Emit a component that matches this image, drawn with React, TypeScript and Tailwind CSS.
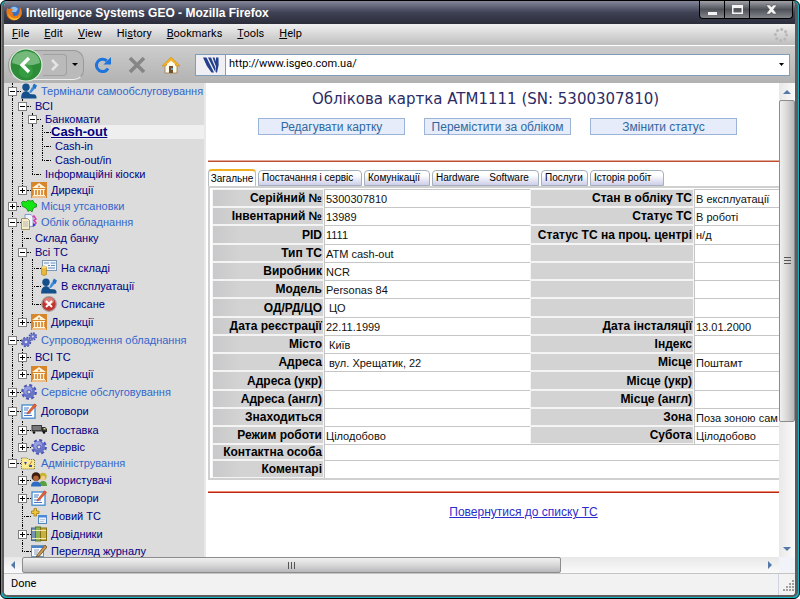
import React from "react";

type IconProps = { className?: string };
const iconBox = "h-4 w-4 shrink-0";

function FirefoxIcon() {
  return (
    <svg viewBox="0 0 16 16" className={iconBox} aria-hidden="true">
      <circle cx="8.5" cy="7.5" r="6.5" fill="#3b6fc4" />
      <path d="M5 3 Q9 0 12 4 L10 7 L6 7 Z" fill="#8fc0ee" />
      <path d="M1 3 Q2 4 3 4 Q5 3 7 4 L6 6 Q5 7 7 8 Q6 11 9 11 Q13 11 13.5 6 Q14.5 2 12 1 Q16 3 16 8 Q15 15 8 15.500 Q1 15 0.500 8 Q0.500 5 1 3Z" fill="#e8791a" />
      <path d="M2 6 Q2 12 8 13.500 Q13 14 14.500 9 Q13 15.500 8 15 Q2 14 2 6Z" fill="#f8c830" />
    </svg>
  );
}

function UserIcon() {
  return (
    <svg viewBox="0 0 16 16" className={iconBox} aria-hidden="true">
      <circle cx="5" cy="4.300" r="3.700" fill="#14508c" />
      <path d="M0 15.500 Q0 8.500 5 8 Q7.500 8 9 11 L14 11.500 Q16 12.500 15.500 15.500Z" fill="#14508c" />
      <path d="M8 9.500 L11 4 L14 5.500 L10 10Z" fill="#3c8cd8" />
      <path d="M11.500 3 L13 0.500 L16 2.500 L14.500 6 L12 5Z" fill="#2474c8" />
    </svg>
  );
}

function BankIcon() {
  return (
    <svg viewBox="0 0 16 16" className={iconBox} aria-hidden="true">
      <rect width="16" height="16" fill="#d8862c" />
      <path d="M1 6 L8 1 L15 6Z M2 7h12v1H2Z M2 13h12v1H2Z M1 14.500h14v1H1Z" fill="#fff4dc" />
      <path d="M3.500 8v5M6.500 8v5M9.500 8v5M12.500 8v5" stroke="#fff4dc" strokeWidth="1.300" />
      <circle cx="8" cy="4.500" r="1" fill="#d8862c" />
    </svg>
  );
}

function MapIcon() {
  return (
    <svg viewBox="0 0 16 16" className={iconBox} aria-hidden="true">
      <path d="M0.500 4.500 L2 3 L5 4 L7 2 L9 3 L12 2.500 L13 5 L15.500 6 L15.500 9 L13 9.500 L12 11 L11 14 L9 12 L7 13.500 L6 11 L4 9.500 L1.500 8.500Z" fill="#14e614" stroke="#08780c" strokeWidth="0.700" />
    </svg>
  );
}

function DocsIcon() {
  return (
    <svg viewBox="0 0 16 16" className={iconBox} aria-hidden="true">
      <path d="M4 0.500h6l2 2v10H4Z" fill="#eef4ff" stroke="#6c88c0" strokeWidth="0.800" />
      <path d="M0.500 4.500h6l2 2v9h-8Z" fill="#f4ecc8" stroke="#8c7c50" strokeWidth="0.800" />
      <path d="M2 8h5M2 10h5M2 12h5" stroke="#a0a4b0" strokeWidth="0.700" />
      <path d="M11.500 3 L13 2 L15 5 L13 6.500 L15 9 L12 12" fill="none" stroke="#d83ca8" strokeWidth="1.500" />
      <path d="M12 9 l3 2 l-3 2z" fill="#3848d0" />
    </svg>
  );
}

function StockIcon() {
  return (
    <svg viewBox="0 0 16 16" className={iconBox} aria-hidden="true">
      <rect x="1.500" y="0.500" width="14" height="10" fill="#f0f6ff" stroke="#7c98b8" />
      <path d="M3 3h5M9.500 3h5M7 5.500h2M10 5.500h4M7 8h7" stroke="#5c80a8" strokeWidth="0.900" />
      <path d="M0.500 7 Q3 5 5.500 7 V14.500 Q3 16.500 0.500 14.500Z" fill="#e8b83c" stroke="#a87c14" strokeWidth="0.600" />
      <ellipse cx="3" cy="7.200" rx="2.400" ry="1" fill="#fbe48c" />
    </svg>
  );
}

function CancelIcon() {
  return (
    <svg viewBox="0 0 16 16" className={iconBox} aria-hidden="true">
      <circle cx="8" cy="8" r="7.300" fill="#c03430" stroke="#a8a0a0" strokeWidth="1.200" />
      <ellipse cx="8" cy="5" rx="5" ry="3.400" fill="#dc7c74" />
      <path d="M5 5l6 6M11 5l-6 6" stroke="#fff" strokeWidth="2" />
    </svg>
  );
}

function GearIcon() {
  return (
    <svg viewBox="0 0 16 16" className={iconBox} aria-hidden="true">
      <circle cx="8" cy="8" r="6.600" fill="none" stroke="#4c54b4" strokeWidth="2.600" strokeDasharray="2.900 2.284" />
      <circle cx="8" cy="8" r="6" fill="#6874c8" />
      <circle cx="7" cy="6.500" r="4" fill="#949ee0" />
      <circle cx="8" cy="8" r="2" fill="#dcdcdc" stroke="#4c54b4" />
    </svg>
  );
}

function GearsIcon() {
  return (
    <svg viewBox="0 0 16 16" className={iconBox} aria-hidden="true">
      <circle cx="5" cy="10" r="4.200" fill="none" stroke="#444ca8" strokeWidth="2" strokeDasharray="1.900 1.399" />
      <circle cx="5" cy="10" r="4" fill="#6874c8" />
      <circle cx="5" cy="10" r="1.300" fill="#e0e0ec" />
      <circle cx="11.800" cy="4.500" r="3.300" fill="none" stroke="#444ca8" strokeWidth="1.800" strokeDasharray="1.500 1.092" />
      <circle cx="11.800" cy="4.500" r="3" fill="#6874c8" />
      <circle cx="11.800" cy="4.500" r="1" fill="#e0e0ec" />
    </svg>
  );
}

function ContractIcon() {
  return (
    <svg viewBox="0 0 16 16" className={iconBox} aria-hidden="true">
      <rect x="1" y="2" width="13" height="13.200" fill="#fff" stroke="#4c90d0" strokeWidth="1.400" />
      <path d="M3 5h5M3 7h4M3 10h7M3 12.500h8" stroke="#4878c8" />
      <path d="M6.500 9.500 L13.500 0.800 L15.700 2.500 L8.500 10 L6 11Z" fill="#e46038" stroke="#a83818" strokeWidth="0.500" />
    </svg>
  );
}

function TruckIcon() {
  return (
    <svg viewBox="0 0 16 16" className={iconBox} aria-hidden="true">
      <rect x="0.500" y="3" width="10.500" height="6.500" fill="#3c3c3c" />
      <rect x="1.500" y="4" width="8.500" height="4" fill="#787878" />
      <path d="M11 5h3l2 2v3h-5Z" fill="#303030" />
      <path d="M12.500 6h1.500l1 1.500h-2.500Z" fill="#d8dc78" />
      <circle cx="3" cy="10.500" r="1.300" fill="#111" />
      <circle cx="13" cy="10.500" r="1.300" fill="#111" />
    </svg>
  );
}

function FolderIcon() {
  return (
    <svg viewBox="0 0 16 16" className={iconBox} aria-hidden="true">
      <path d="M0.500 3h5.500l1.500 1.500H13.500V14H0.500Z" fill="#fbec94" stroke="#7c6c20" strokeDasharray="1 1" />
      <path d="M3 7h3l-1.500 3z M8 10h3v2H8z" fill="#3c50a0" />
      <path d="M11 6l-3 5" stroke="#c87828" />
    </svg>
  );
}

function UsersIcon() {
  return (
    <svg viewBox="0 0 16 16" className={iconBox} aria-hidden="true">
      <circle cx="12" cy="4.500" r="3.700" fill="#c8b430" />
      <circle cx="12" cy="6" r="2.300" fill="#f0cc94" />
      <path d="M8 14 Q8 9 12 9 Q16 9 16 14Z" fill="#58a040" />
      <circle cx="5" cy="4.700" r="4.400" fill="#3c1c10" />
      <circle cx="5" cy="6.300" r="2.800" fill="#b06438" />
      <path d="M0 14.500 Q0 9.500 5 9.500 Q10 9.500 10 14.500Z" fill="#2c6cc4" />
    </svg>
  );
}

function NewIcon() {
  return (
    <svg viewBox="0 0 16 16" className={iconBox} aria-hidden="true">
      <rect x="7.500" y="7.500" width="8" height="8" fill="#eaf2ff" stroke="#5484c0" />
      <path d="M7 7h9v2.500H7Z" fill="#4c88d8" />
      <path d="M9 11.500h5M9 13.500h4" stroke="#b8c8e0" />
      <path d="M3 0.500h2.500v2.500H8V5.500H5.500v2.500H3V5.500H0.500V3H3Z" fill="#f0c83c" stroke="#a07c18" strokeWidth="0.800" />
    </svg>
  );
}

function BooksIcon() {
  return (
    <svg viewBox="0 0 16 16" className={iconBox} aria-hidden="true">
      <rect x="0.500" y="2" width="4" height="12.500" fill="#7894b4" stroke="#4c6484" />
      <rect x="4.500" y="1" width="5" height="14" fill="#8cb454" stroke="#547c28" />
      <rect x="9.500" y="2" width="6" height="12.500" fill="#c8b03c" stroke="#847018" />
      <path d="M1 4.500h14M1 12.500h14" stroke="#f0e8b8" />
    </svg>
  );
}

function LogIcon() {
  return (
    <svg viewBox="0 0 16 16" className={iconBox} aria-hidden="true">
      <rect x="0.500" y="2.500" width="12" height="11" fill="#f4f8ff" stroke="#6c90bc" />
      <path d="M1 3h11v2H1Z" fill="#4c84cc" />
      <path d="M3 7h5M3 9h4M3 11h3" stroke="#90a0b8" />
      <path d="M6 12 L14 2 L16 4 L8.500 13 L5.500 14Z" fill="#c89850" stroke="#543c18" strokeWidth="0.700" />
    </svg>
  );
}

type Node = {
  label: string;
  rails: string;
  box?: "+" | "-";
  last?: boolean;
  height: string;
  Icon?: React.FC<IconProps>;
  section?: boolean;
  current?: boolean;
};

// rails: one character for each ancestor column, "|" where its line goes on.
const tree: Node[] = [
  { label: "Термінали самообслуговування", rails: "", box: "-", height: "h-4", Icon: UserIcon, section: true },
  { label: "ВСІ", rails: "|", box: "-", height: "h-3.5" },
  { label: "Банкомати", rails: "||", box: "-", height: "h-3" },
  { label: "Cash-out", rails: "|||", height: "h-3.5", current: true },
  { label: "Cash-in", rails: "|||", height: "h-3.5" },
  { label: "Cash-out/in", rails: "|||", height: "h-3.5", last: true },
  { label: "Інформаційні кіоски", rails: "||", height: "h-3.5", last: true },
  { label: "Дирекції", rails: "|", box: "+", height: "h-4.5", Icon: BankIcon, last: true },
  { label: "Місця утсановки", rails: "", box: "+", height: "h-3.5", Icon: MapIcon, section: true },
  { label: "Облік обладнання", rails: "", box: "-", height: "h-4.5", Icon: DocsIcon, section: true },
  { label: "Склад банку", rails: "|", height: "h-3.5" },
  { label: "Всі ТС", rails: "|", box: "-", height: "h-3.5" },
  { label: "На складі", rails: "||", height: "h-4.5", Icon: StockIcon },
  { label: "В експлуатації", rails: "||", height: "h-4.5", Icon: UserIcon },
  { label: "Списане", rails: "||", height: "h-4.5", Icon: CancelIcon, last: true },
  { label: "Дирекції", rails: "|", box: "+", height: "h-4.5", Icon: BankIcon, last: true },
  { label: "Супроводження обладнання", rails: "", box: "-", height: "h-4.5", Icon: GearsIcon, section: true },
  { label: "ВСІ ТС", rails: "|", box: "+", height: "h-4" },
  { label: "Дирекції", rails: "|", box: "+", height: "h-4.5", Icon: BankIcon, last: true },
  { label: "Сервісне обслуговування", rails: "", box: "+", height: "h-4.5", Icon: GearIcon, section: true },
  { label: "Договори", rails: "", box: "-", height: "h-5", Icon: ContractIcon },
  { label: "Поставка", rails: "|", box: "+", height: "h-4.5", Icon: TruckIcon },
  { label: "Сервіс", rails: "|", box: "+", height: "h-4", Icon: GearIcon, last: true },
  { label: "Адміністрування", rails: "", box: "-", height: "h-4", Icon: FolderIcon, section: true, last: true },
  { label: "Користувачі", rails: " ", box: "+", height: "h-4.5", Icon: UsersIcon },
  { label: "Договори", rails: " ", box: "+", height: "h-4.5", Icon: ContractIcon },
  { label: "Новий ТС", rails: " ", height: "h-4.5", Icon: NewIcon },
  { label: "Довідники", rails: " ", box: "+", height: "h-4.5", Icon: BooksIcon },
  { label: "Перегляд журналу", rails: " ", height: "h-4", Icon: LogIcon, last: true },
];

function TreeRow({ node }: { node: Node }) {
  const { Icon } = node;
  return (
    <li className={`flex items-center whitespace-nowrap ${node.height}`}>
      {node.rails.split("").map((rail, i) => (
        <span key={i} className="flex h-full w-2.5 shrink-0 pl-[5px]">
          {rail === "|" && <span className="h-full border-l border-dotted border-black" />}
        </span>
      ))}
      <span className="grid h-full w-2.5 shrink-0 grid-cols-1 grid-rows-1">
        <span className="col-start-1 row-start-1 flex pl-[5px]">
          <span className={`border-l border-dotted border-black ${node.last ? "h-1/2" : "h-full"}`} />
        </span>
        {node.box ? (
          <button
            aria-label={node.box === "+" ? "Розгорнути" : "Згорнути"}
            className="z-10 col-start-1 row-start-1 ml-px grid h-[9px] w-[9px] place-items-center self-center border border-[#808080] bg-white"
          >
            <svg viewBox="0 0 5 5" className="h-[5px] w-[5px]" aria-hidden="true">
              <path d={node.box === "+" ? "M0 2h5v1H0zM2 0h1v5H2z" : "M0 2h5v1H0z"} fill="#000" />
            </svg>
          </button>
        ) : (
          <span className="col-start-1 row-start-1 ml-[5px] self-center border-t border-dotted border-black" />
        )}
      </span>
      <span className="w-1 shrink-0 border-t border-dotted border-black" />
      {Icon && <Icon />}
      {node.current ? (
        <a href="#cash-out" className="flex-1 bg-[#efefef] text-[13px] leading-[14px] font-bold text-[#000080] underline">
          {node.label}
        </a>
      ) : (
        <a href="#open" className={`pl-1 ${node.section ? "text-[#3366cc]" : "text-[#000080]"}`}>
          {node.label}
        </a>
      )}
    </li>
  );
}

type Row = { a: string; av?: string; b?: string; bv?: string; inset?: boolean };
const rows: Row[] = [
  { a: "Серійний №", av: "5300307810", b: "Стан в обліку ТС", bv: "В експлуатації" },
  { a: "Інвентарний №", av: "13989", b: "Статус ТС", bv: "В роботі" },
  { a: "PID", av: "1111", b: "Статус ТС на проц. центрі", bv: "н/д" },
  { a: "Тип ТС", av: "ATM cash-out" },
  { a: "Виробник", av: "NCR" },
  { a: "Модель", av: "Personas 84" },
  { a: "ОД/РД/ЦО", av: "ЦО", inset: true },
  { a: "Дата реєстрації", av: "22.11.1999", b: "Дата інсталяції", bv: "13.01.2000" },
  { a: "Місто", av: "Київ", b: "Індекс", inset: true },
  { a: "Адреса", av: "вул. Хрещатик, 22", b: "Місце", bv: "Поштамт", inset: true },
  { a: "Адреса (укр)", b: "Місце (укр)" },
  { a: "Адреса (англ)", b: "Місце (англ)" },
  { a: "Знаходиться", b: "Зона", bv: "Поза зоною сам" },
  { a: "Режим роботи", av: "Цілодобово", b: "Субота", bv: "Цілодобово" },
];

const labelCell =
  "border border-[#f4f4f4] bg-linear-to-r from-[#c9c9cb] to-[#d3d3d3] to-25% p-0 pr-px text-right align-middle font-bold text-[12px] leading-[14px] text-black";
const plainLabelCell =
  "border border-[#f4f4f4] bg-[#d3d3d3] p-0 pr-px text-right align-middle font-bold text-[12px] leading-[14px] text-black";
const valueCell = "border-t border-l border-[#c6c6c6] p-0 align-middle";

function CardTable() {
  return (
    <table className="w-full table-fixed border-separate border-spacing-0 text-[11px] leading-[14px] whitespace-nowrap text-[#111]">
      <colgroup>
        <col className="w-[112px]" />
        <col className="w-[206px]" />
        <col className="w-[164px]" />
        <col />
      </colgroup>
      <tbody>
        {rows.map((r, i) => (
          <tr key={r.a} className={i % 4 === 2 ? "h-[19px]" : "h-[18px]"}>
            <th scope="row" className={labelCell}>{r.a}</th>
            <td className={`${valueCell} ${r.inset ? "pl-1" : "pl-px"}`}>{r.av}</td>
            <th scope="row" className={plainLabelCell}>{r.b}</th>
            <td className={`${valueCell} pl-px`}>{r.bv}</td>
          </tr>
        ))}
        <tr className="h-4">
          <th scope="row" className={labelCell}>Контактна особа</th>
          <td colSpan={3} className={valueCell} />
        </tr>
        <tr className="h-[18px]">
          <th scope="row" className={labelCell}>Коментарі</th>
          <td colSpan={3} className={valueCell} />
        </tr>
      </tbody>
    </table>
  );
}

const tabs = [
  { label: "Постачання і сервіс", width: "w-[104px]" },
  { label: "Комунікації", width: "w-[66px]" },
  { label: "Hardware", label2: "Software", width: "w-[107px]" },
  { label: "Послуги", width: "w-[47px]" },
  { label: "Історія робіт", width: "w-[74px]" },
];

function Arrow({ d }: { d: string }) {
  return (
    <svg viewBox="0 0 8 8" className="h-2 w-2" aria-hidden="true">
      <path d={d} fill="#5478a8" />
    </svg>
  );
}

const menus = ["File", "Edit", "View", "History", "Bookmarks", "Tools", "Help"];
const accessKey = [0, 0, 0, 2, 0, 0, 0];

export default function App() {
  return (
    <div className="h-screen bg-white font-['Liberation_Sans',Arial,sans-serif] text-[11px] text-black">
      <div className="h-full rounded-md border border-black bg-[#12b4c4] pr-px pb-px pl-px">
        <div className="flex h-full flex-col overflow-hidden rounded-md border-r-3 border-b-2 border-l-2 border-[#5c5c5c] bg-[#f2f2f2]">
          <header className="flex h-[23px] shrink-0 items-start justify-between bg-linear-to-b from-[#85879a] via-[#3f4254] to-[#2b2d3b] pr-0.5 pl-0.5">
            <div className="flex items-center gap-1 pt-1 text-[12px] leading-4 font-bold text-white">
              <FirefoxIcon />
              <h1>Intelligence Systems GEO - Mozilla Firefox</h1>
            </div>
            <div className="flex h-[18px] divide-x divide-black overflow-hidden rounded-b border border-t-0 border-black bg-linear-to-b from-[#a0a2a8] via-[#50525a] to-[#85878c]">
              <button aria-label="Minimize" className="grid w-[25px] place-items-center">
                <svg viewBox="0 0 11 11" className="h-[11px] w-[11px]"><path d="M1 8h9v3H1z" fill="#f4f4f4" /></svg>
              </button>
              <button aria-label="Maximize" className="grid w-[25px] place-items-center">
                <svg viewBox="0 0 11 11" className="h-[11px] w-[11px]"><path d="M0 1h11v9H0zM1.500 4v4.500h8V4z" fill="#f4f4f4" fillRule="evenodd" /></svg>
              </button>
              <button aria-label="Close" className="grid w-[42px] place-items-center">
                <svg viewBox="0 0 11 11" className="h-[11px] w-[11px]"><path d="M0 1h4l1.500 2L7 1h4L7.500 5.500 11 10H7L5.500 8 4 10H0l3.500-4.500z" fill="#f4f4f4" stroke="#444" strokeWidth="0.500" /></svg>
              </button>
            </div>
          </header>

          <nav className="flex h-[22px] shrink-0 items-center justify-between border-b border-white bg-linear-to-b from-[#f0f0f0] to-[#bebebe] pr-1.5 pl-2 font-['Roboto',sans-serif] text-[11px]">
            <ul className="flex gap-[15px]">
              {menus.map((m, i) => (
                <li key={m}>
                  <button>
                    {m.slice(0, accessKey[i])}
                    <span className="underline">{m[accessKey[i]]}</span>
                    {m.slice(accessKey[i] + 1)}
                  </button>
                </li>
              ))}
            </ul>
            <svg viewBox="0 0 16 16" className="h-4 w-4" aria-hidden="true">
              <circle cx="8" cy="8" r="5.600" fill="none" stroke="#b8b8b8" strokeWidth="3" strokeLinecap="round" strokeDasharray="0.100 4.298" />
            </svg>
          </nav>

          <div className="flex h-[37px] shrink-0 items-center bg-linear-to-b from-[#cdcdcd] to-[#b2b2b2] pr-[5px] pl-1">
            <div className="flex h-[30px] w-[76px] items-center rounded-l-[15px] rounded-r-[10px] border border-[#999] border-b-[#eee] bg-[#bababa]">
              <button aria-label="Back" className="-my-1 shrink-0">
                <svg viewBox="0 0 34 34" className="h-[34px] w-[34px]">
                  <circle cx="17" cy="17" r="16" fill="#2c8c38" stroke="#dce8dc" strokeWidth="1.200" />
                  <path d="M3 15 Q4 4 17 3 Q30 4 31 15 Q17 20 3 15Z" fill="#74b87c" />
                  <circle cx="17" cy="23" r="7" fill="#3ca848" opacity="0.600" />
                  <path d="M20 10l-7 7 7 7" fill="none" stroke="#fff" strokeWidth="3.400" />
                </svg>
              </button>
              <button aria-label="Forward" className="grid h-[22px] w-6 place-items-center rounded-r border border-l-0 border-[#a0a0a0]">
                <svg viewBox="0 0 10 12" className="h-3 w-2.5"><path d="M2 1l5 5-5 5" fill="none" stroke="#e4e4e4" strokeWidth="2.600" /></svg>
              </button>
              <button aria-label="Recent pages" className="ml-[5px]">
                <svg viewBox="0 0 6 3" className="h-[3px] w-1.5"><path d="M0 0h6L3 3z" fill="#000" /></svg>
              </button>
            </div>
            <div className="flex items-center gap-4 pr-[15px] pl-2.5">
              <button aria-label="Reload">
                <svg viewBox="0 0 18 18" className="h-[18px] w-[18px]">
                  <path d="M14 12.500 A6.200 6.200 0 1 1 12.800 4.800" fill="none" stroke="#1c74dc" strokeWidth="3" />
                  <path d="M17 1v7.500H9.500z" fill="#1c74dc" />
                </svg>
              </button>
              <button aria-label="Stop">
                <svg viewBox="0 0 18 18" className="h-[18px] w-[18px]"><path d="M2 2l14 14M16 2L2 16" stroke="#868686" strokeWidth="3.600" /></svg>
              </button>
              <button aria-label="Home">
                <svg viewBox="0 0 18 18" className="h-[18px] w-[18px]">
                  <path d="M3 9h12v8H3z" fill="#fffbe8" stroke="#9c7c48" strokeWidth="0.800" />
                  <path d="M9 1L18 10H15L9 4.500 3 10H0z" fill="#f8b41c" stroke="#c88010" strokeWidth="0.500" />
                  <path d="M9 4.500l4 3.500v2H5V8z" fill="#fffbe8" />
                  <path d="M7 10h4v7H7z" fill="#74502c" />
                  <path d="M9 12h2v2H9z" fill="#58a8d8" />
                </svg>
              </button>
            </div>
            <div className="flex h-[22px] flex-1 items-center border border-[#7f9db9] bg-white">
              <div className="grid h-full w-[30px] place-items-center border-r border-[#7f9db9] bg-[#f0f0f4]">
                <svg viewBox="0 0 18 18" className="h-[18px] w-[18px]" aria-hidden="true">
                  <path d="M1 1.500H4.500L12 16.500H9.500Q4 10 1 1.500zM6 1.500H9L13.500 12V16.500zM10.500 1.500H12.500L14.500 7V12z" fill="#24408c" />
                  <path d="M14 1.500h2.500Q17.500 9 15 16.500h-1z" fill="#24408c" />
                </svg>
              </div>
              <input aria-label="Address" defaultValue="http://www.isgeo.com.ua/" className="min-w-0 flex-1 bg-transparent pl-[3px] font-['Roboto',sans-serif] text-[11px] outline-none" />
              <button aria-label="Show history" className="px-[5px]">
                <svg viewBox="0 0 5 3" className="h-[3px] w-[5px]"><path d="M0 0h5L2.500 3z" fill="#000" /></svg>
              </button>
            </div>
          </div>

          <div className="flex min-h-0 flex-1">
            <div className="flex min-w-0 flex-1 flex-col">
              <div className="flex min-h-0 flex-1">
                <aside className="w-[202px] shrink-0 overflow-hidden border-r-2 border-[#e8e8e8] bg-[#dcdcdc] pl-[3px] leading-3">
                  <ul>
                    {tree.map((n, i) => (
                      <TreeRow key={i} node={n} />
                    ))}
                  </ul>
                </aside>
                <main className="min-w-0 flex-1 overflow-hidden bg-white pl-0.5">
                  <h2 className="pt-2 pr-4 text-center font-['DejaVu_Sans',sans-serif] text-[15px] leading-4 text-[#2c2c64]">
                    Облікова картка ATM1111 (SN: 5300307810)
                  </h2>
                  <div className="flex justify-center gap-[19px] pt-[11px] pl-2">
                    {["Редагувати картку", "Перемістити за обліком", "Змінити статус"].map((b) => (
                      <button key={b} className="h-[17px] w-[147px] border border-[#9cb4d8] bg-[#e6ecfa] text-[12px] leading-[14px] whitespace-nowrap text-[#3068a0]">
                        {b}
                      </button>
                    ))}
                  </div>
                  <hr className="mt-[25px] h-0.5 border-t border-[#e0a898] bg-[#c05030]" />
                  <div className="flex gap-0.5 pt-[7px] text-[10px] leading-3">
                    <button className="h-[17px] w-12 rounded-t-sm border-x border-t-2 border-[#b8bcc4] border-t-[#f0b020] bg-white">Загальне</button>
                    {tabs.map((t) => (
                      <button
                        key={t.label}
                        className={`flex h-4 items-center gap-2.5 self-end rounded-t-sm border border-[#a4b0bc] bg-linear-to-b from-white from-30% to-[#ceceea] pl-[3px] whitespace-nowrap ${t.width}`}
                      >
                        <span>{t.label}</span>
                        {t.label2 && <span>{t.label2}</span>}
                      </button>
                    ))}
                  </div>
                  <div className="border-t-2 border-l-2 border-b-2 border-[#d0d0d0] pt-px pl-0.5">
                    <CardTable />
                  </div>
                  <hr className="mt-[11px] h-0.5 border-t border-[#f08870] bg-[#b82810]" />
                  <p className="pt-[11px] pl-[60px] text-center text-[12px] leading-4">
                    <a href="#list" className="text-[#2c2ccc] underline">Повернутися до списку ТС</a>
                  </p>
                </main>
              </div>
              <div className="flex h-[17px] shrink-0 items-stretch border-b border-[#c4c4c4] bg-linear-to-b from-[#e8e8e8] to-[#fafafa]">
                <button aria-label="Scroll left" className="grid w-[18px] place-items-center">
                  <Arrow d="M6 0v8L2 4z" />
                </button>
                <div className="flex flex-1">
                  <div className="grid w-[73%] place-items-center rounded-xs border border-[#8c8c8c] bg-linear-to-b from-[#f0f0f0] via-[#d8d8d8] to-[#b8b8bc]">
                    <svg viewBox="0 0 8 7" className="h-[7px] w-2" aria-hidden="true"><path d="M0 0h1v7H0zM3 0h1v7H3zM6 0h1v7H6z" fill="#555" /></svg>
                  </div>
                </div>
                <button aria-label="Scroll right" className="grid w-[18px] place-items-center">
                  <Arrow d="M2 0v8L6 4z" />
                </button>
              </div>
            </div>
            <div className="flex w-4 shrink-0 flex-col bg-linear-to-r from-[#e8e8e8] to-[#fafafa]">
              <button aria-label="Scroll up" className="grid h-[17px] place-items-center">
                <Arrow d="M0 6h8L4 2z" />
              </button>
              <div className="flex-1">
                <div className="grid h-[73%] place-items-center rounded-xs border border-[#8c8c8c] bg-linear-to-r from-[#f0f0f0] via-[#d8d8d8] to-[#b8b8bc]">
                  <svg viewBox="0 0 7 8" className="h-2 w-[7px]" aria-hidden="true"><path d="M0 0h7v1H0zM0 3h7v1H0zM0 6h7v1H0z" fill="#555" /></svg>
                </div>
              </div>
              <button aria-label="Scroll down" className="grid h-4 place-items-center">
                <Arrow d="M0 2h8L4 6z" />
              </button>
              <div className="h-[17px] border-b border-[#c4c4c4] bg-[#f2f3f8]" />
            </div>
          </div>

          <footer className="flex h-[21px] shrink-0 items-center justify-between bg-[#f2f2f2] pl-[7px] font-['Roboto',sans-serif] text-[11px]">
            <span>Done</span>
            <div className="flex h-full items-end border-l border-[#d0d4e4] pr-px pb-1 pl-1">
              <svg viewBox="0 0 11 11" className="h-[11px] w-[11px]" aria-hidden="true">
                <path d="M0 9h2v2H0zM3 9h2v2H3zM6 9h2v2H6zM9 9h2v2H9zM3 6h2v2H3zM6 6h2v2H6zM9 6h2v2H9zM6 3h2v2H6zM9 3h2v2H9zM9 0h2v2H9z" fill="#a0a0a0" />
              </svg>
            </div>
          </footer>
        </div>
      </div>
    </div>
  );
}
